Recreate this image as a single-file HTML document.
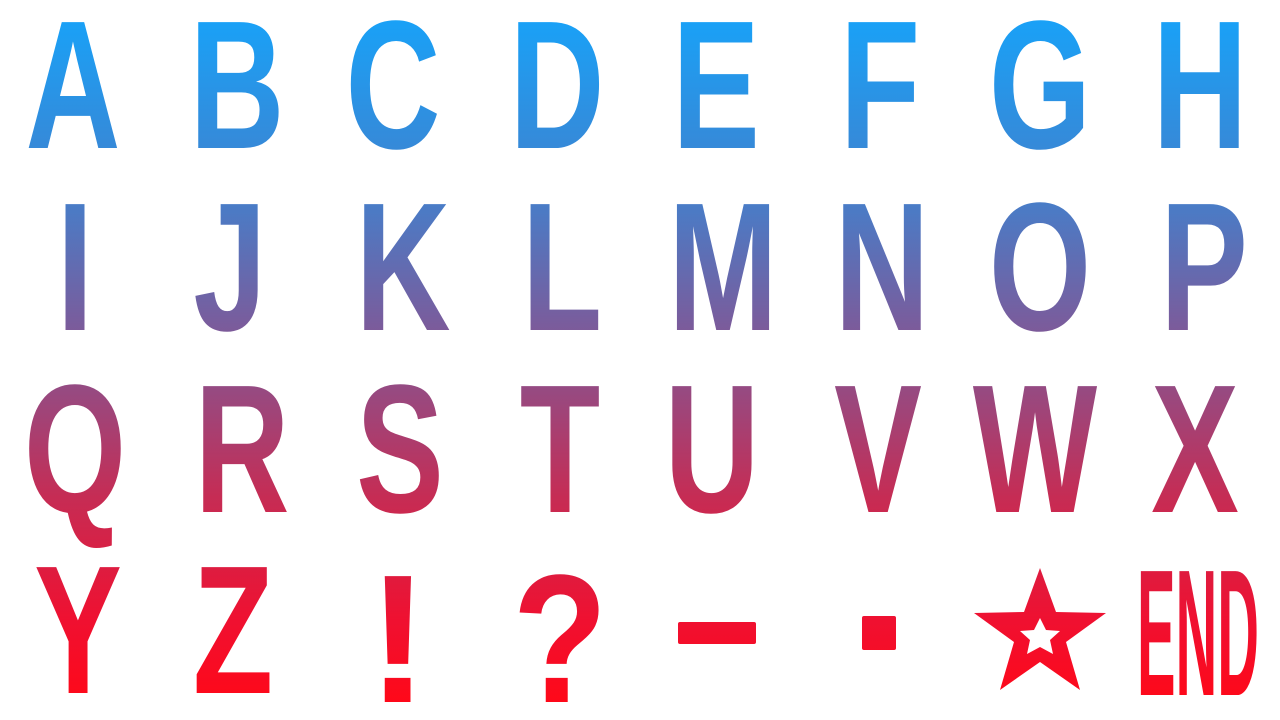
<!DOCTYPE html>
<html><head><meta charset="utf-8"><style>
html,body{margin:0;padding:0;background:#fff;width:1280px;height:720px;overflow:hidden}
svg{display:block}
text{font-family:"Liberation Sans",sans-serif;font-weight:bold;font-size:183px;text-anchor:middle}
</style></head><body>
<svg width="1280" height="720" viewBox="0 0 1280 720" xmlns="http://www.w3.org/2000/svg">
<defs>
<linearGradient id="g" gradientUnits="userSpaceOnUse" x1="0" y1="15" x2="0" y2="705">
<stop offset="0" stop-color="#18a2f8"/>
<stop offset="0.22" stop-color="#3a86d4"/>
<stop offset="0.45" stop-color="#7a5c9c"/>
<stop offset="0.7" stop-color="#c62c54"/>
<stop offset="0.88" stop-color="#f01030"/>
<stop offset="1" stop-color="#ff0818"/>
</linearGradient>
</defs>
<g fill="url(#g)">
<g transform="translate(73,0) scale(0.72,1)"><text x="0" y="148">A</text></g>
<g transform="translate(237,0) scale(0.72,1)"><text x="0" y="148">B</text></g>
<g transform="translate(393,0) scale(0.72,1)"><text x="0" y="148">C</text></g>
<g transform="translate(557,0) scale(0.72,1)"><text x="0" y="148">D</text></g>
<g transform="translate(716,0) scale(0.72,1)"><text x="0" y="148">E</text></g>
<g transform="translate(880,0) scale(0.72,1)"><text x="0" y="148">F</text></g>
<g transform="translate(1040,0) scale(0.72,1)"><text x="0" y="148">G</text></g>
<g transform="translate(1200,0) scale(0.72,1)"><text x="0" y="148">H</text></g>
<g transform="translate(75,0) scale(0.72,1)"><text x="0" y="330">I</text></g>
<g transform="translate(230,0) scale(0.72,1)"><text x="0" y="330">J</text></g>
<g transform="translate(403,0) scale(0.72,1)"><text x="0" y="330">K</text></g>
<g transform="translate(562,0) scale(0.72,1)"><text x="0" y="330">L</text></g>
<g transform="translate(723,0) scale(0.72,1)"><text x="0" y="330">M</text></g>
<g transform="translate(882,0) scale(0.72,1)"><text x="0" y="330">N</text></g>
<g transform="translate(1040,0) scale(0.72,1)"><text x="0" y="330">O</text></g>
<g transform="translate(1204,0) scale(0.72,1)"><text x="0" y="330">P</text></g>
<g transform="translate(75,0) scale(0.72,1)"><text x="0" y="512">Q</text></g>
<g transform="translate(242,0) scale(0.72,1)"><text x="0" y="512">R</text></g>
<g transform="translate(400,0) scale(0.72,1)"><text x="0" y="512">S</text></g>
<g transform="translate(560,0) scale(0.72,1)"><text x="0" y="512">T</text></g>
<g transform="translate(712,0) scale(0.72,1)"><text x="0" y="512">U</text></g>
<g transform="translate(878,0) scale(0.72,1)"><text x="0" y="512">V</text></g>
<g transform="translate(1035,0) scale(0.72,1)"><text x="0" y="512">W</text></g>
<g transform="translate(1195,0) scale(0.72,1)"><text x="0" y="512">X</text></g>
<g transform="translate(78,0) scale(0.72,1)"><text x="0" y="693">Y</text></g>
<g transform="translate(233,0) scale(0.72,1)"><text x="0" y="693">Z</text></g>
<text x="398" y="702">!</text>
<g transform="translate(560,0) scale(0.85,1)"><text x="0" y="702">?</text></g>
<rect x="678" y="622" width="78" height="22" rx="2"/>
<rect x="862" y="616" width="34" height="34" rx="2"/>
<path fill-rule="evenodd" d="M1040 568 L1056 612 L1106 613 L1066 642 L1080 690 L1040 662 L1000 690 L1014 642 L974 613 L1024 612 Z M1040 618 L1046 630 L1060 631 L1050 640 L1053 654 L1040 647 L1027 654 L1030 640 L1020 631 L1034 630 Z"/>
<text x="1198" y="695" textLength="122" lengthAdjust="spacingAndGlyphs" style="font-size:180px">END</text>
</g>
</svg>
</body></html>
